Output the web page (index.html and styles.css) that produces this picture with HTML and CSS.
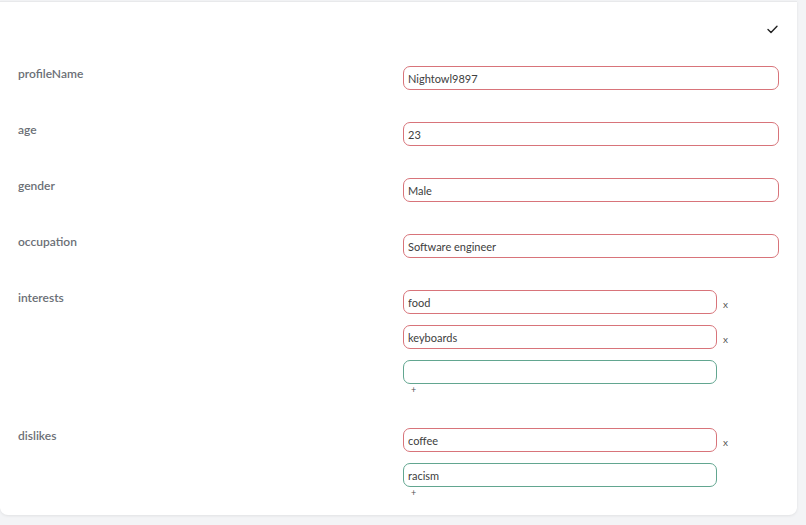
FILE: index.html
```html
<!DOCTYPE html>
<html lang="en">
<head>
    <meta charset="UTF-8">
    <meta name="viewport" content="width=device-width, initial-scale=1.0">
    <title>Profile</title>
    <link rel="stylesheet" href="styles.css">
</head>
<body>

<div class="profile-card">
    <div class="card-toolbar">
        <button class="save-btn" title="Save">
            <svg width="11" height="9" viewBox="0 0 11 9" fill="none">
                <path d="M1 4.6 L4 7.6 L10 1.2" stroke="#222" stroke-width="1.4" stroke-linecap="round" stroke-linejoin="round"/>
            </svg>
        </button>
    </div>

    <div class="field-row">
        <div class="field-label">profileName</div>
        <div class="field-value">
            <input class="text-input invalid" type="text" value="Nightowl9897">
        </div>
    </div>

    <div class="field-row">
        <div class="field-label">age</div>
        <div class="field-value">
            <input class="text-input invalid" type="text" value="23">
        </div>
    </div>

    <div class="field-row">
        <div class="field-label">gender</div>
        <div class="field-value">
            <input class="text-input invalid" type="text" value="Male">
        </div>
    </div>

    <div class="field-row">
        <div class="field-label">occupation</div>
        <div class="field-value">
            <input class="text-input invalid" type="text" value="Software engineer">
        </div>
    </div>

    <div class="field-row">
        <div class="field-label">interests</div>
        <div class="field-value list-field">
            <div class="list-item">
                <input class="text-input invalid" type="text" value="food">
                <button class="remove-btn">x</button>
            </div>
            <div class="list-item">
                <input class="text-input invalid" type="text" value="keyboards">
                <button class="remove-btn">x</button>
            </div>
            <div class="list-item">
                <input class="text-input valid" type="text" value="">
            </div>
            <button class="add-btn">+</button>
        </div>
    </div>

    <div class="field-row">
        <div class="field-label">dislikes</div>
        <div class="field-value list-field">
            <div class="list-item">
                <input class="text-input invalid" type="text" value="coffee">
                <button class="remove-btn">x</button>
            </div>
            <div class="list-item">
                <input class="text-input valid" type="text" value="racism">
            </div>
            <button class="add-btn">+</button>
        </div>
    </div>
</div>

</body>
</html>
```

FILE: styles.css
```css
* {
    margin: 0;
    padding: 0;
    box-sizing: border-box;
}

body {
    font-family: Lato, "Open Sans", sans-serif;
    background-color: #f3f4f6;
    height: 100vh;
    padding-top: 1px;
}

.profile-card {
    width: 797px;
    height: 514px;
    background-color: #fff;
    border-top: 1px solid #e8e9eb;
    border-radius: 0 0 8px 8px;
    box-shadow: 0 1px 3px rgba(0, 0, 0, 0.08);
    padding: 0 18px;
}

.card-toolbar {
    display: flex;
    justify-content: flex-end;
    height: 64px;
    padding-top: 20px;
    padding-right: 1px;
}

.save-btn {
    background: none;
    border: none;
    width: 12px;
    height: 10px;
    cursor: pointer;
}

.field-row {
    display: flex;
    margin-bottom: 32px;
}

.field-label {
    width: 385px;
    flex-shrink: 0;
    font-size: 12px;
    line-height: 16px;
    font-weight: 600;
    color: #6b6f76;
}

.field-value {
    flex-grow: 1;
}

.text-input {
    display: block;
    width: 100%;
    height: 24px;
    padding: 0 4px;
    border: 1.5px solid #d8747a;
    border-radius: 7px;
    font-family: inherit;
    font-size: 11px;
    color: #404040;
    background-color: #fff;
    outline: none;
}

.text-input.valid {
    border-color: #62a690;
}

.list-item {
    display: flex;
    align-items: center;
    margin-bottom: 11px;
}

.list-item:last-of-type {
    margin-bottom: 0;
}

.list-item .text-input {
    width: 314px;
    flex-shrink: 0;
}

.remove-btn {
    background: none;
    border: none;
    font-family: inherit;
    font-size: 10px;
    color: #555;
    margin-left: 6px;
    margin-top: 3px;
    cursor: pointer;
}

.add-btn {
    display: block;
    background: none;
    border: none;
    font-family: inherit;
    font-size: 9px;
    line-height: 12px;
    height: 12px;
    color: #555;
    margin-left: 8px;
    cursor: pointer;
}
```
